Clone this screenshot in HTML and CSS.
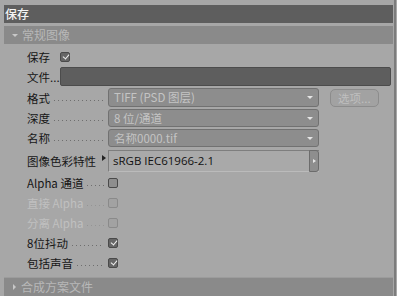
FILE: index.html
```html
<!DOCTYPE HTML>
<html lang="zh-CN">
<head>
    <title>保存</title>
    <meta charset="UTF-8">
    <link rel="stylesheet" href="styles.css">
</head>
<body>
<div class="panel">
    <div class="title">保存</div>
    <div class="group-head"><span class="caret down"></span>常规图像</div>
    <div class="rows">
        <div class="row r-save">
            <span class="label short">保存</span>
            <span class="check on"></span>
        </div>
        <div class="row r-file">
            <span class="label short">文件...</span>
            <span class="input"></span>
        </div>
        <div class="row r-first">
            <span class="label">格式<i class="dots"></i></span>
            <span class="select">TIFF (PSD 图层)</span>
            <span class="btn">选项...</span>
        </div>
        <div class="row">
            <span class="label">深度<i class="dots"></i></span>
            <span class="select">8 位/通道</span>
        </div>
        <div class="row">
            <span class="label">名称<i class="dots"></i></span>
            <span class="select">名称0000.tif</span>
        </div>
        <div class="row r-profile">
            <span class="label">图像色彩特性<i class="tri"></i></span>
            <span class="field">sRGB IEC61966-2.1<span class="field-btn"></span></span>
        </div>
        <div class="row">
            <span class="label">Alpha 通道<i class="dots"></i></span>
            <span class="check"></span>
        </div>
        <div class="row off">
            <span class="label">直接 Alpha<i class="dots"></i></span>
            <span class="check"></span>
        </div>
        <div class="row off">
            <span class="label">分离 Alpha<i class="dots"></i></span>
            <span class="check"></span>
        </div>
        <div class="row">
            <span class="label">8位抖动<i class="dots"></i></span>
            <span class="check on"></span>
        </div>
        <div class="row">
            <span class="label">包括声音<i class="dots"></i></span>
            <span class="check on"></span>
        </div>
    </div>
    <div class="group-head bottom"><span class="caret right"></span>合成方案文件</div>
</div>
</body>
</html>
```
FILE: styles.css
```css
* {
    box-sizing: border-box;
}

body {
    margin: 0;
    background: #a7a7a7;
    font-family: "Noto Sans CJK SC", "Noto Sans", sans-serif;
    font-size: 11.5px;
    color: #161616;
}

.panel {
    margin-left: 4px;
    padding-top: 5px;
    width: 392px;
    height: 296px;
    border-right: 2px solid #7c7c7c;
    padding-right: 1px;
    display: flex;
    flex-direction: column;
}

.title {
    height: 18px;
    line-height: 18px;
    background: #5e5e5e;
    color: #f4f4f4;
    padding-left: 1px;
    font-size: 12px;
    font-weight: 500;
}

.group-head {
    margin-top: 3px;
    height: 18px;
    line-height: 18px;
    background: #8a8a8a;
    color: #b8b8b8;
    font-size: 12px;
    display: flex;
    align-items: center;
}

.group-head.bottom {
    margin-top: auto;
    border-top: 1px solid #9c9c9c;
    height: 19px;
}

.caret {
    width: 0;
    height: 0;
    margin: 0 4px 0 8px;
}

.caret.down {
    border-left: 3px solid transparent;
    border-right: 3px solid transparent;
    border-top: 3px solid #c8c8c8;
}

.caret.right {
    border-top: 3px solid transparent;
    border-bottom: 3px solid transparent;
    border-left: 3px solid #c8c8c8;
    margin: 0 5px 0 9px;
}

.rows {
    padding: 3px 2px 0 23px;
}

.row {
    height: 20px;
    display: flex;
    align-items: center;
}

.r-save {
    height: 19px;
}

.r-file,
.r-first {
    height: 21px;
}

.r-profile {
    height: 25px;
}

.label {
    width: 81px;
    display: flex;
    align-items: center;
    white-space: nowrap;
}

.label.short {
    width: 33px;
}

.off .label {
    color: #c0c0c0;
}

.dots {
    flex: 1;
    align-self: flex-end;
    height: 1px;
    margin: 0 4px 5px 4px;
    background-image: linear-gradient(to right, #6e6e6e 1px, transparent 1px);
    background-size: 4px 1px;
}

.off .dots {
    background-image: linear-gradient(to right, #949494 1px, transparent 1px);
}

.tri {
    margin: -6px 0 0 6px;
    width: 0;
    height: 0;
    border-top: 3px solid transparent;
    border-bottom: 3px solid transparent;
    border-left: 4px solid #222;
}

.check {
    width: 10px;
    height: 10px;
    border: 1px solid #4a4a4a;
    border-radius: 2px;
    background: #8e8e8e;
    position: relative;
}

.check.on {
    background: #666;
}

.check.on::after {
    content: "";
    position: absolute;
    left: 2.5px;
    top: 0;
    width: 3px;
    height: 5px;
    border-right: 1.5px solid #f0f0f0;
    border-bottom: 1.5px solid #f0f0f0;
    transform: rotate(40deg);
}

.off .check {
    border-color: #8a8a8a;
    background: #a2a2a2;
}

.input {
    flex: 1;
    height: 19px;
    background: #5e5e5e;
    border: 1px solid #4c4c4c;
    border-radius: 2px;
}

.select {
    width: 211px;
    height: 18px;
    line-height: 16px;
    padding-left: 5px;
    background: #8d8d8d;
    border: 1px solid #717171;
    border-radius: 3px;
    color: #c4c4c4;
    position: relative;
}

.r-first .select {
    height: 19px;
}

.select::after {
    content: "";
    position: absolute;
    right: 5px;
    top: 7px;
    border-left: 3px solid transparent;
    border-right: 3px solid transparent;
    border-top: 3px solid #e6e6e6;
}

.btn {
    margin-left: 11px;
    width: 49px;
    height: 18px;
    line-height: 16px;
    border: 1px solid #8c8c8c;
    border-radius: 5px;
    background: #a2a2a2;
    color: #bfbfbf;
    padding-left: 7px;
}

.field {
    width: 211px;
    height: 22px;
    line-height: 20px;
    padding-left: 4px;
    background: #a9a9a9;
    border-top: 1px solid #7e7e7e;
    border-left: 1px solid #7e7e7e;
    border-bottom: 1px solid #bbbbbb;
    color: #111;
    font-family: "Open Sans", "Noto Sans CJK SC", sans-serif;
    font-size: 11.5px;
    position: relative;
}

.field-btn {
    position: absolute;
    right: 0;
    top: -1px;
    width: 10px;
    height: 22px;
    background: #8e8e8e;
    border: 1px solid #6c6c6c;
    border-radius: 0 3px 3px 0;
}

.field-btn::after {
    content: "";
    position: absolute;
    left: 3px;
    top: 8px;
    border-top: 2px solid transparent;
    border-bottom: 2px solid transparent;
    border-left: 3px solid #e6e6e6;
}
```
